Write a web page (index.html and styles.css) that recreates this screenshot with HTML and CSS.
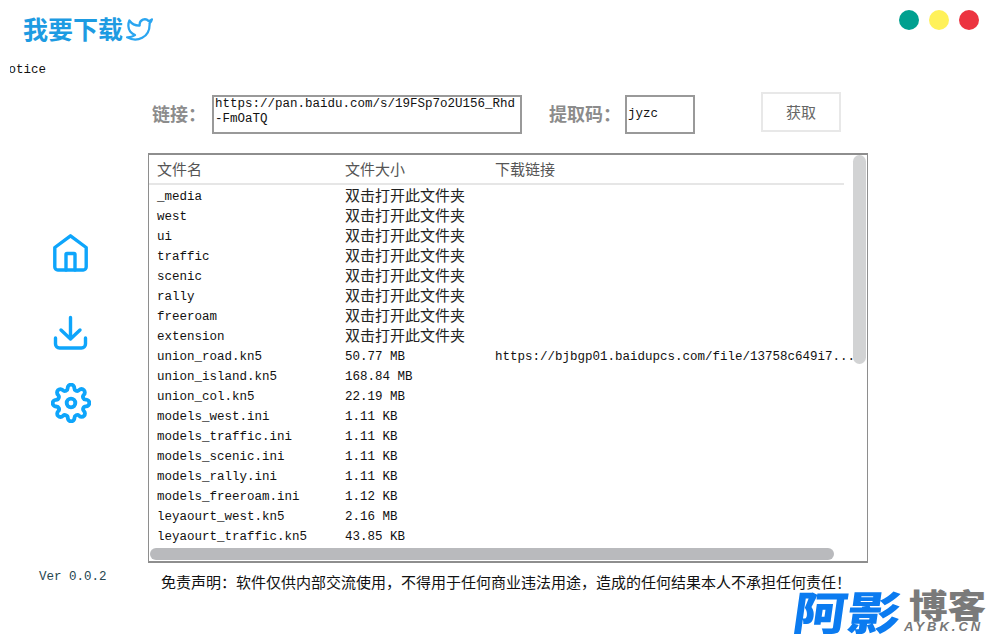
FILE: index.html
```html
<!DOCTYPE html>
<html lang="zh-CN">
<head>
<meta charset="utf-8">
<title>我要下载</title>
<link rel="stylesheet" href="styles.css">
</head>
<body>
<div class="page">
  <header class="header">
    <h1 class="title">我要下载</h1>
    <svg class="bird" viewBox="0 0 24 24"><path d="M23 3a10.9 10.9 0 0 1-3 1.5 4.48 4.48 0 0 0-7.86 3v1A10.66 10.66 0 0 1 3 4s-4 9 5 13a11.64 11.64 0 0 1-7 2c9 5 20 0 20-11.5a4.5 4.5 0 0 0-.08-.83A7.72 7.72 0 0 0 23 3z"/></svg>
    <div class="dots">
      <span class="dot dot-green"></span>
      <span class="dot dot-yellow"></span>
      <span class="dot dot-red"></span>
    </div>
  </header>
  <div class="notice"><span>Notice</span></div>
  <div class="body">
    <aside class="sidebar">
      <nav class="nav">
        <svg class="icon icon-home" viewBox="0 0 36 38"><path d="M17.5 1.8 L33.2 13.5 V33 a3 3 0 0 1-3 3 H4.8 a3 3 0 0 1-3-3 V13.5 Z"/><path d="M13 36 V20.5 a1 1 0 0 1 1-1 H21 a1 1 0 0 1 1 1 V36"/></svg>
        <svg class="icon icon-down" viewBox="0 0 36 36"><path d="M17.5 2.5 V24 M8 15 L17.5 24 L27 15"/><path d="M2.5 23 V29 a4 4 0 0 0 4 4 H28.5 a4 4 0 0 0 4-4 V23"/></svg>
        <svg class="icon icon-gear" viewBox="0 0 24 24"><circle cx="12" cy="12" r="2.6"/><path d="M19.4 15a1.65 1.65 0 0 0 .33 1.82l.06.06a2 2 0 0 1 0 2.83 2 2 0 0 1-2.83 0l-.06-.06a1.65 1.65 0 0 0-1.82-.33 1.65 1.65 0 0 0-1 1.51V21a2 2 0 0 1-2 2 2 2 0 0 1-2-2v-.09A1.65 1.65 0 0 0 9 19.4a1.65 1.65 0 0 0-1.82.33l-.06.06a2 2 0 0 1-2.83 0 2 2 0 0 1 0-2.83l.06-.06a1.65 1.65 0 0 0 .33-1.82 1.65 1.65 0 0 0-1.51-1H3a2 2 0 0 1-2-2 2 2 0 0 1 2-2h.09A1.65 1.65 0 0 0 4.6 9a1.65 1.65 0 0 0-.33-1.82l-.06-.06a2 2 0 0 1 0-2.83 2 2 0 0 1 2.83 0l.06.06a1.65 1.65 0 0 0 1.82.33H9a1.65 1.65 0 0 0 1-1.51V3a2 2 0 0 1 2-2 2 2 0 0 1 2 2v.09a1.65 1.65 0 0 0 1 1.51 1.65 1.65 0 0 0 1.82-.33l.06-.06a2 2 0 0 1 2.83 0 2 2 0 0 1 0 2.83l-.06.06a1.65 1.65 0 0 0-.33 1.82V9a1.65 1.65 0 0 0 1.51 1H21a2 2 0 0 1 2 2 2 2 0 0 1-2 2h-.09a1.65 1.65 0 0 0-1.51 1z"/></svg>
      </nav>
      <div class="version">Ver 0.0.2</div>
    </aside>
    <main class="main">
      <form class="form">
        <label class="label label-link">链接：</label>
        <div class="field field-link">https://pan.baidu.com/s/19FSp7o2U156_Rhd<br>-FmOaTQ</div>
        <label class="label label-code">提取码：</label>
        <div class="field field-code">jyzc</div>
        <div class="button">获取</div>
      </form>
      <section class="list">
        <div class="row head"><span class="c1">文件名</span><span class="c2">文件大小</span><span class="c3">下载链接</span></div>
        <div class="rows">
          <div class="row"><span class="c1">_media</span><span class="c2 cjk">双击打开此文件夹</span></div>
          <div class="row"><span class="c1">west</span><span class="c2 cjk">双击打开此文件夹</span></div>
          <div class="row"><span class="c1">ui</span><span class="c2 cjk">双击打开此文件夹</span></div>
          <div class="row"><span class="c1">traffic</span><span class="c2 cjk">双击打开此文件夹</span></div>
          <div class="row"><span class="c1">scenic</span><span class="c2 cjk">双击打开此文件夹</span></div>
          <div class="row"><span class="c1">rally</span><span class="c2 cjk">双击打开此文件夹</span></div>
          <div class="row"><span class="c1">freeroam</span><span class="c2 cjk">双击打开此文件夹</span></div>
          <div class="row"><span class="c1">extension</span><span class="c2 cjk">双击打开此文件夹</span></div>
          <div class="row"><span class="c1">union_road.kn5</span><span class="c2">50.77 MB</span><span class="c3">https://bjbgp01.baidupcs.com/file/13758c649i7...</span></div>
          <div class="row"><span class="c1">union_island.kn5</span><span class="c2">168.84 MB</span></div>
          <div class="row"><span class="c1">union_col.kn5</span><span class="c2">22.19 MB</span></div>
          <div class="row"><span class="c1">models_west.ini</span><span class="c2">1.11 KB</span></div>
          <div class="row"><span class="c1">models_traffic.ini</span><span class="c2">1.11 KB</span></div>
          <div class="row"><span class="c1">models_scenic.ini</span><span class="c2">1.11 KB</span></div>
          <div class="row"><span class="c1">models_rally.ini</span><span class="c2">1.11 KB</span></div>
          <div class="row"><span class="c1">models_freeroam.ini</span><span class="c2">1.12 KB</span></div>
          <div class="row"><span class="c1">leyaourt_west.kn5</span><span class="c2">2.16 MB</span></div>
          <div class="row"><span class="c1">leyaourt_traffic.kn5</span><span class="c2">43.85 KB</span></div>
        </div>
        <div class="thumb-v"></div>
        <div class="thumb-h"></div>
      </section>
      <p class="disclaimer">免责声明：软件仅供内部交流使用，不得用于任何商业违法用途，造成的任何结果本人不承担任何责任！</p>
    </main>
  </div>
  <div class="logo">
    <span class="logo-blue">阿影</span>
    <span class="logo-side"><span class="logo-gray">博客</span><span class="logo-url">AYBK.CN</span></span>
  </div>
</div>
</body>
</html>
```
FILE: styles.css
```css
* { box-sizing: border-box; }
html, body { margin: 0; padding: 0; background: #fff; }
.page {
  position: relative;
  width: 992px;
  height: 634px;
  overflow: hidden;
  font-family: "Liberation Mono", "Noto Sans CJK SC", monospace;
  font-size: 12.5px;
  color: #111;
}
.header { display: flex; align-items: center; height: 60px; padding: 0 13px 0 23px; }
.title { margin: 0 0 4px; font: 700 25px/30px "Noto Sans CJK SC", sans-serif; color: #1d9be2; }
.bird { width: 27px; height: 27px; margin: 0 0 1px 3px; fill: none; stroke: #2aa5f0; stroke-width: 2; stroke-linejoin: round; }
.dots { display: flex; gap: 10px; margin-left: auto; margin-bottom: 20px; }
.dot { width: 20px; height: 20px; border-radius: 50%; }
.dot-green { background: #00a08f; }
.dot-yellow { background: #fff159; }
.dot-red { background: #ec3440; }
.notice { height: 32px; margin-left: 10px; overflow: hidden; line-height: 20px; }
.notice span { display: block; margin-left: -9px; }
.body { display: flex; }
.sidebar { position: relative; width: 148px; height: 542px; }
.nav { display: flex; flex-direction: column; align-items: center; width: 141px; padding-top: 142px; }
.icon { display: block; fill: none; stroke: #0ea5fb; stroke-linecap: round; stroke-linejoin: round; }
.icon-home { width: 36px; height: 38px; stroke-width: 3.4; }
.icon-down { width: 36px; height: 36px; stroke-width: 3.4; margin-top: 43px; }
.icon-gear { width: 40px; height: 40px; stroke-width: 2.3; margin-top: 32px; }
.version { margin: 146px 0 0 39px; line-height: 16px; color: #26464f; }
.main { width: 720px; }
.form { display: flex; align-items: flex-start; height: 61px; }
.label { font: 700 18px/24px "Noto Sans CJK SC", sans-serif; color: #8c8c8c; white-space: nowrap; margin-top: 9px; }
.label-link { width: 64px; padding-left: 4px; }
.label-code { width: 76px; margin-left: 27px; }
.field { border: 2px solid #999; background: #fff; line-height: 15px; height: 39px; margin-top: 3px; color: #111; }
.field-link { width: 310px; padding: 0 1px; white-space: nowrap; overflow: hidden; }
.field-code { width: 70px; padding: 10px 1px 0; }
.button {
  display: flex; align-items: center; justify-content: center;
  width: 80px; height: 40px; margin-left: 66px;
  border: 2px solid #e8e8e8;
  font: 400 15px/20px "Noto Sans CJK SC", sans-serif; color: #666;
}
.list {
  position: relative;
  width: 720px; height: 410px;
  border: 1px solid #8e8e8e;
  border-width: 2px 1px 2px 1px;
  overflow: hidden;
}
.row { display: flex; height: 20px; line-height: 20px; white-space: nowrap; }
.head {
  width: 695px; height: 30px; line-height: 28px;
  border-bottom: 2px solid #e6e6e6;
  font-family: "Noto Sans CJK SC", sans-serif; font-size: 15px; color: #555;
}
.rows { margin-top: 2px; }
.c1 { width: 196px; padding-left: 8px; flex: none; }
.c2 { width: 150px; flex: none; }
.c3 { flex: none; }
.cjk { font: 400 15px/16px "Noto Sans CJK SC", sans-serif; color: #222; }
.thumb-v { position: absolute; right: 1px; top: 0; width: 13px; height: 209px; border-radius: 7px; background: #d2d3d4; }
.thumb-h { position: absolute; left: 1px; bottom: 1px; width: 684px; height: 12px; border-radius: 6px; background: #b9babd; }
.disclaimer { margin: 9px 0 0 13px; font: 400 15px/20px "Noto Sans CJK SC", sans-serif; color: #111; white-space: nowrap; }
.logo { position: absolute; left: 797px; top: 588px; height: 44px; display: flex; align-items: flex-start; gap: 20px; font-family: "Noto Sans CJK SC", sans-serif; font-weight: 900; }
.logo-blue { font-size: 46px; line-height: 44px; color: #0b7bf0; transform-origin: left top; transform: skewX(-8deg) scaleX(1.17); white-space: nowrap; }
.logo-side { display: flex; flex-direction: column; align-items: flex-start; }
.logo-gray { height: 33px; font-size: 33px; line-height: 33px; color: #7a7a7a; white-space: nowrap; transform-origin: left top; transform: scaleX(1.17); }
.logo-url { height: 11px; margin-left: -5px; font: italic 700 13px/11px "Liberation Sans", sans-serif; letter-spacing: 3px; color: #777; white-space: nowrap; }
```
